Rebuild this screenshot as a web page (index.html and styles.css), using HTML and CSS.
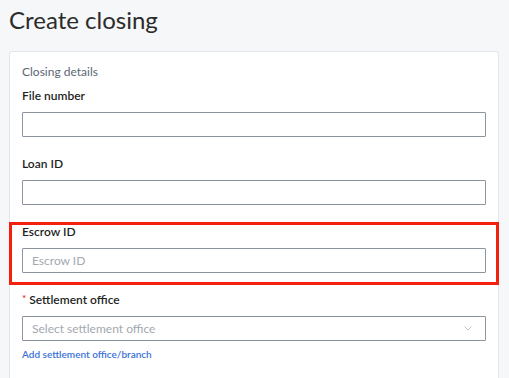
FILE: index.html
```html
<!DOCTYPE html>
<html lang="en">
<head>
<meta charset="utf-8">
<title>Create closing</title>
<link rel="stylesheet" href="styles.css">
</head>
<body>
<h1 class="page-title">Create closing</h1>
<section class="card">
  <div class="section-title">Closing details</div>
  <div class="field">
    <label class="label">File number</label>
    <div class="input"></div>
  </div>
  <div class="field">
    <label class="label">Loan ID</label>
    <div class="input"></div>
  </div>
  <div class="field highlighted">
    <label class="label">Escrow ID</label>
    <div class="input"><span class="placeholder">Escrow ID</span></div>
    <div class="highlight-box"></div>
  </div>
  <div class="field field-required">
    <label class="label"><span class="req">*</span>Settlement office</label>
    <div class="input select">
      <span class="placeholder">Select settlement office</span>
      <svg class="chevron" width="8" height="5" viewBox="0 0 8 5"><path d="M0.5 0.5 L4 4 L7.5 0.5" fill="none" stroke="#c3c7cd" stroke-width="1"/></svg>
    </div>
    <a class="link" href="#">Add settlement office/branch</a>
  </div>
</section>
</body>
</html>
```
FILE: styles.css
```css
html, body {
  margin: 0;
  padding: 0;
}
body {
  background: #f6f7f9;
  font-family: Lato, "Noto Sans", sans-serif;
  color: #222;
  width: 509px;
  height: 378px;
  overflow: hidden;
}
.page-title {
  margin: 0;
  padding: 5px 0 0 9px;
  font-size: 24px;
  line-height: 30px;
  font-weight: 400;
  color: #2b2b2b;
  height: 46px;
}
.card {
  margin-left: 9px;
  width: 490px;
  height: 327px;
  box-sizing: border-box;
  background: #fff;
  border: 1px solid #e4e6eb;
  border-bottom: 0;
  border-radius: 3px 3px 0 0;
  padding: 12px 12px 0 12px;
}
.section-title {
  font-size: 12px;
  line-height: 15px;
  color: #5b6576;
  margin-bottom: 9px;
}
.field {
  position: relative;
  margin-bottom: 19px;
}
.label {
  display: block;
  font-size: 12px;
  line-height: 16px;
  font-weight: 600;
  color: #1f1f1f;
  margin-bottom: 8px;
}
.input {
  box-sizing: border-box;
  height: 25px;
  border: 1px solid #8b949f;
  border-radius: 1px;
  display: flex;
  align-items: center;
  padding: 0 9px;
}
.placeholder {
  font-size: 12px;
  color: #a3a9b1;
  flex: 1;
}
.select .chevron {
  margin-right: 4px;
}
.field-required {
  margin-top: 1px;
  margin-bottom: 0;
}
.req {
  color: #d9342b;
  font-size: 10px;
  margin-right: 3px;
  vertical-align: top;
  position: relative;
  top: -2px;
}
.link {
  display: block;
  margin-top: 6px;
  font-size: 10px;
  line-height: 14px;
  font-weight: 600;
  color: #3a72d8;
  text-decoration: none;
}
.highlight-box {
  position: absolute;
  left: -13px;
  right: -13px;
  top: -2px;
  bottom: -12px;
  border: 3px solid #f2200d;
  pointer-events: none;
}
```
